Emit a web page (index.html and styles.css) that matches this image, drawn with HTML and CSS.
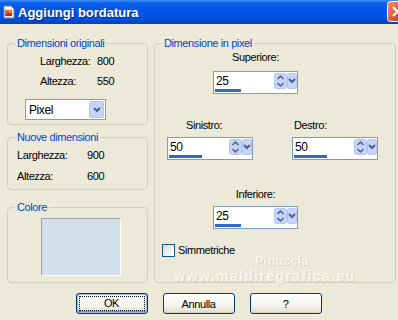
FILE: index.html
```html
<!doctype html>
<html>
  <head>
    <title>Aggiungi bordatura</title>
    <link rel="stylesheet" href="styles.css">
  </head>
  <body>
    <div class="window">
      <div class="titlebar">
        <svg class="app-icon" width="14" height="14" viewBox="0 0 14 14">
          <path d="M2 1h7l3 3v9H2z" fill="#f4f1ea" stroke="#8a8a8a" stroke-width="1"/>
          <rect x="3" y="5" width="7" height="6" fill="#e0623c"/>
          <path d="M3 11l3-4 2 2 2-2v4z" fill="#b9301f"/>
          <circle cx="8" cy="6.5" r="1" fill="#f6c24a"/>
        </svg>
        <span class="title">Aggiungi bordatura</span>
        <span class="close">
          <svg width="21" height="21" viewBox="0 0 21 21">
            <defs>
              <linearGradient id="cg" x1="0" y1="0" x2="1" y2="1">
                <stop offset="0" stop-color="#f08a63"/>
                <stop offset="1" stop-color="#c1381a"/>
              </linearGradient>
            </defs>
            <rect x="0.5" y="0.5" width="20" height="20" rx="3" fill="url(#cg)" stroke="#fff"/>
            <path d="M6 6l9 9M15 6l-9 9" stroke="#fff" stroke-width="2.2"/>
          </svg>
        </span>
      </div>

      <div class="dialog">
        <div class="panels">
          <div class="col-left">
            <div class="group g-orig">
              <div class="group-title">Dimensioni originali</div>
              <div class="dims">
                <span>Larghezza:</span><span>800</span>
                <span>Altezza:</span><span>550</span>
              </div>
              <div class="select">
                <span class="select-val">Pixel</span>
                <span class="select-btn">
                  <svg width="10" height="8" viewBox="0 0 10 8"><path d="M2 2l3 3 3-3" fill="none" stroke="#4d6185" stroke-width="2"/></svg>
                </span>
              </div>
            </div>

            <div class="group g-new">
              <div class="group-title">Nuove dimensioni</div>
              <div class="dims dims-new">
                <span>Larghezza:</span><span>900</span>
                <span>Altezza:</span><span>600</span>
              </div>
            </div>

            <div class="group g-color">
              <div class="group-title">Colore</div>
              <div class="swatch"></div>
            </div>
          </div>

          <div class="group g-pixel">
            <div class="group-title">Dimensione in pixel</div>

            <div class="field field-center">
              <div class="field-label">Superiore:</div>
              <div class="spin">
                <div class="spin-row">
                  <span class="spin-val">25</span>
                  <svg class="spin-btns" width="23" height="16" viewBox="0 0 23 16">
                    <rect x="0.5" y="0.5" width="12" height="15" rx="2" fill="#c6d5fb" stroke="#b2c4ef"/>
                    <rect x="13.5" y="0.5" width="9" height="15" rx="2" fill="#c6d5fb" stroke="#b2c4ef"/>
                    <path d="M3.5 6l3-3 3 3M3.5 10l3 3 3-3" fill="none" stroke="#4d6185" stroke-width="1.5"/>
                    <path d="M15 6l3 3 3-3" fill="none" stroke="#4d6185" stroke-width="2"/>
                  </svg>
                </div>
                <div class="spin-track"><div class="spin-fill" style="width: 26px"></div></div>
              </div>
            </div>

            <div class="side-row">
              <div class="field field-left">
                <div class="field-label">Sinistro:</div>
                <div class="spin">
                  <div class="spin-row">
                    <span class="spin-val">50</span>
                    <svg class="spin-btns" width="23" height="16" viewBox="0 0 23 16">
                      <rect x="0.5" y="0.5" width="12" height="15" rx="2" fill="#c6d5fb" stroke="#b2c4ef"/>
                      <rect x="13.5" y="0.5" width="9" height="15" rx="2" fill="#c6d5fb" stroke="#b2c4ef"/>
                      <path d="M3.5 6l3-3 3 3M3.5 10l3 3 3-3" fill="none" stroke="#4d6185" stroke-width="1.5"/>
                      <path d="M15 6l3 3 3-3" fill="none" stroke="#4d6185" stroke-width="2"/>
                    </svg>
                  </div>
                  <div class="spin-track"><div class="spin-fill" style="width: 33px"></div></div>
                </div>
              </div>
              <div class="field field-right">
                <div class="field-label">Destro:</div>
                <div class="spin">
                  <div class="spin-row">
                    <span class="spin-val">50</span>
                    <svg class="spin-btns" width="23" height="16" viewBox="0 0 23 16">
                      <rect x="0.5" y="0.5" width="12" height="15" rx="2" fill="#c6d5fb" stroke="#b2c4ef"/>
                      <rect x="13.5" y="0.5" width="9" height="15" rx="2" fill="#c6d5fb" stroke="#b2c4ef"/>
                      <path d="M3.5 6l3-3 3 3M3.5 10l3 3 3-3" fill="none" stroke="#4d6185" stroke-width="1.5"/>
                      <path d="M15 6l3 3 3-3" fill="none" stroke="#4d6185" stroke-width="2"/>
                    </svg>
                  </div>
                  <div class="spin-track"><div class="spin-fill" style="width: 33px"></div></div>
                </div>
              </div>
            </div>

            <div class="field field-center field-bottom">
              <div class="field-label">Inferiore:</div>
              <div class="spin">
                <div class="spin-row">
                  <span class="spin-val">25</span>
                  <svg class="spin-btns" width="23" height="16" viewBox="0 0 23 16">
                    <rect x="0.5" y="0.5" width="12" height="15" rx="2" fill="#c6d5fb" stroke="#b2c4ef"/>
                    <rect x="13.5" y="0.5" width="9" height="15" rx="2" fill="#c6d5fb" stroke="#b2c4ef"/>
                    <path d="M3.5 6l3-3 3 3M3.5 10l3 3 3-3" fill="none" stroke="#4d6185" stroke-width="1.5"/>
                    <path d="M15 6l3 3 3-3" fill="none" stroke="#4d6185" stroke-width="2"/>
                  </svg>
                </div>
                <div class="spin-track"><div class="spin-fill" style="width: 26px"></div></div>
              </div>
            </div>

            <label class="check">
              <span class="check-box"></span>
              <span>Simmetriche</span>
            </label>

            <div class="watermark">
              <span class="wm-name">Pinuccia</span>
              <span class="wm-url">www.maldiregrafica.eu</span>
            </div>
          </div>
        </div>

        <div class="buttons">
          <button class="btn btn-default"><span class="focus">OK</span></button>
          <button class="btn">Annulla</button>
          <button class="btn">?</button>
        </div>
      </div>
    </div>
  </body>
</html>
```

FILE: styles.css
```css
body {
  margin: 0;
  background: #ece9d8;
  font-family: "Liberation Sans", Arial, sans-serif;
  font-size: 11px;
  letter-spacing: -0.4px;
  color: #000;
  overflow: hidden;
}
.window {
  width: 398px;
  height: 320px;
  overflow: hidden;
}
.titlebar {
  height: 24px;
  display: flex;
  align-items: center;
  padding-left: 2px;
  background: linear-gradient(#3d8ff5 0, #0a62ea 3px, #0056e6 10px, #0052e0 18px, #0043c6 24px);
}
.app-icon {
  flex: none;
  margin-top: -1px;
}
.title {
  flex: 1;
  margin-left: 2px;
  color: #fff;
  font-weight: bold;
  font-size: 13px;
  letter-spacing: 0;
  text-shadow: 1px 1px 0 #0a2a8a;
}
.close {
  flex: none;
  height: 21px;
  margin-right: -10px;
  margin-top: -2px;
}
.dialog {
  padding: 19px 2px 0 7px;
}
.panels {
  display: flex;
  gap: 6px;
}
.col-left {
  width: 141px;
  display: flex;
  flex-direction: column;
}
.group {
  border: 1px solid #d0d0bf;
  border-radius: 4px;
}
.group-title {
  width: fit-content;
  margin: -7px 0 0 7px;
  padding: 0 2px;
  line-height: 13px;
  background: #ece9d8;
  color: #0046d5;
}
.dims {
  display: grid;
  grid-template-columns: 57px auto;
  padding: 1px 0 0 32px;
  line-height: 20px;
}
.select {
  display: flex;
  align-items: center;
  width: 81px;
  height: 21px;
  box-sizing: border-box;
  margin: 8px 0 4px 17px;
  border: 1px solid #7f9db9;
  background: #fff;
  font-size: 12px;
}
.select-val {
  flex: 1;
  padding-left: 3px;
}
.select-btn {
  width: 15px;
  height: 17px;
  margin-right: 1px;
  display: flex;
  align-items: center;
  justify-content: center;
  border-radius: 2px;
  background: #c6d5fb;
  border: 1px solid #b2c4ef;
  box-sizing: border-box;
}
.g-new {
  margin-top: 12px;
}
.dims-new {
  grid-template-columns: 70px auto;
  padding: 1px 0 2px 9px;
  line-height: 21px;
}
.g-color {
  margin-top: 17px;
  flex: 1;
}
.swatch {
  width: 80px;
  height: 58px;
  box-sizing: border-box;
  margin: 4px 0 6px 33px;
  background: #d3dfed;
  border-top: 1px solid #a0a0a0;
  border-left: 1px solid #a0a0a0;
  border-bottom: 1px solid #fff;
  border-right: 1px solid #fff;
}
.g-pixel {
  position: relative;
  flex: 1;
}
.field-label {
  line-height: 14px;
}
.field-center {
  width: 85px;
  margin-left: 58px;
  text-align: center;
}
.field-center .field-label {
  margin-bottom: 7px;
}
.field-bottom {
  margin-top: 27px;
}
.side-row {
  display: flex;
  gap: 39px;
  margin: 24px 0 0 12px;
}
.field-left,
.field-right {
  width: 86px;
}
.field-left .field-label {
  padding-left: 19px;
  margin-bottom: 5px;
}
.field-right .field-label {
  padding-left: 2px;
  margin-bottom: 5px;
}
.field-bottom .field-label {
  margin-bottom: 5px;
}
.spin {
  height: 23px;
  box-sizing: border-box;
  border: 1px solid #7f9db9;
  background: #fff;
  text-align: left;
}
.spin-row {
  display: flex;
  align-items: center;
  height: 17px;
}
.spin-val {
  flex: 1;
  padding-left: 2px;
  font-size: 12px;
}
.spin-btns {
  flex: none;
}
.spin-track {
  height: 3px;
  margin: 0 1px;
}
.spin-fill {
  height: 3px;
  background: #3168c6;
}
.check {
  display: flex;
  align-items: center;
  gap: 3px;
  margin: 15px 0 0 7px;
  line-height: 13px;
}
.check-box {
  width: 13px;
  height: 13px;
  box-sizing: border-box;
  border: 1px solid #1c5180;
  background: linear-gradient(135deg, #dcdcd7, #fff);
}
.watermark {
  position: absolute;
  left: 0;
  right: 20px;
  top: 210px;
  display: flex;
  flex-direction: column;
  align-items: center;
  font-weight: bold;
  font-size: 12px;
  letter-spacing: 0.5px;
  color: #f7f5ee;
  text-shadow: 1px 1px 0 #d8d4c4;
  line-height: 15px;
}
.wm-name {
  margin-left: 34px;
}
.wm-url {
  font-size: 14px;
  letter-spacing: 1.4px;
}
.buttons {
  display: flex;
  justify-content: center;
  gap: 15px;
  margin-top: 10px;
  padding-right: 6px;
}
.btn {
  width: 72px;
  height: 21px;
  padding: 0;
  border: 1px solid #003c74;
  border-radius: 3px;
  background: linear-gradient(#ffffff, #f4f3ee 60%, #e6e3d6 90%, #d6d0c5);
  font-family: "Liberation Sans", Arial, sans-serif;
  font-size: 11px;
  letter-spacing: -0.4px;
  color: #000;
}
.btn-default {
  box-shadow: inset 0 0 0 1px #98b8ea, inset 0 -1px 0 1px #6e8fd8;
}
.focus {
  display: block;
  margin: 3px;
  line-height: 13px;
  outline: 1px dotted #000;
}
```
